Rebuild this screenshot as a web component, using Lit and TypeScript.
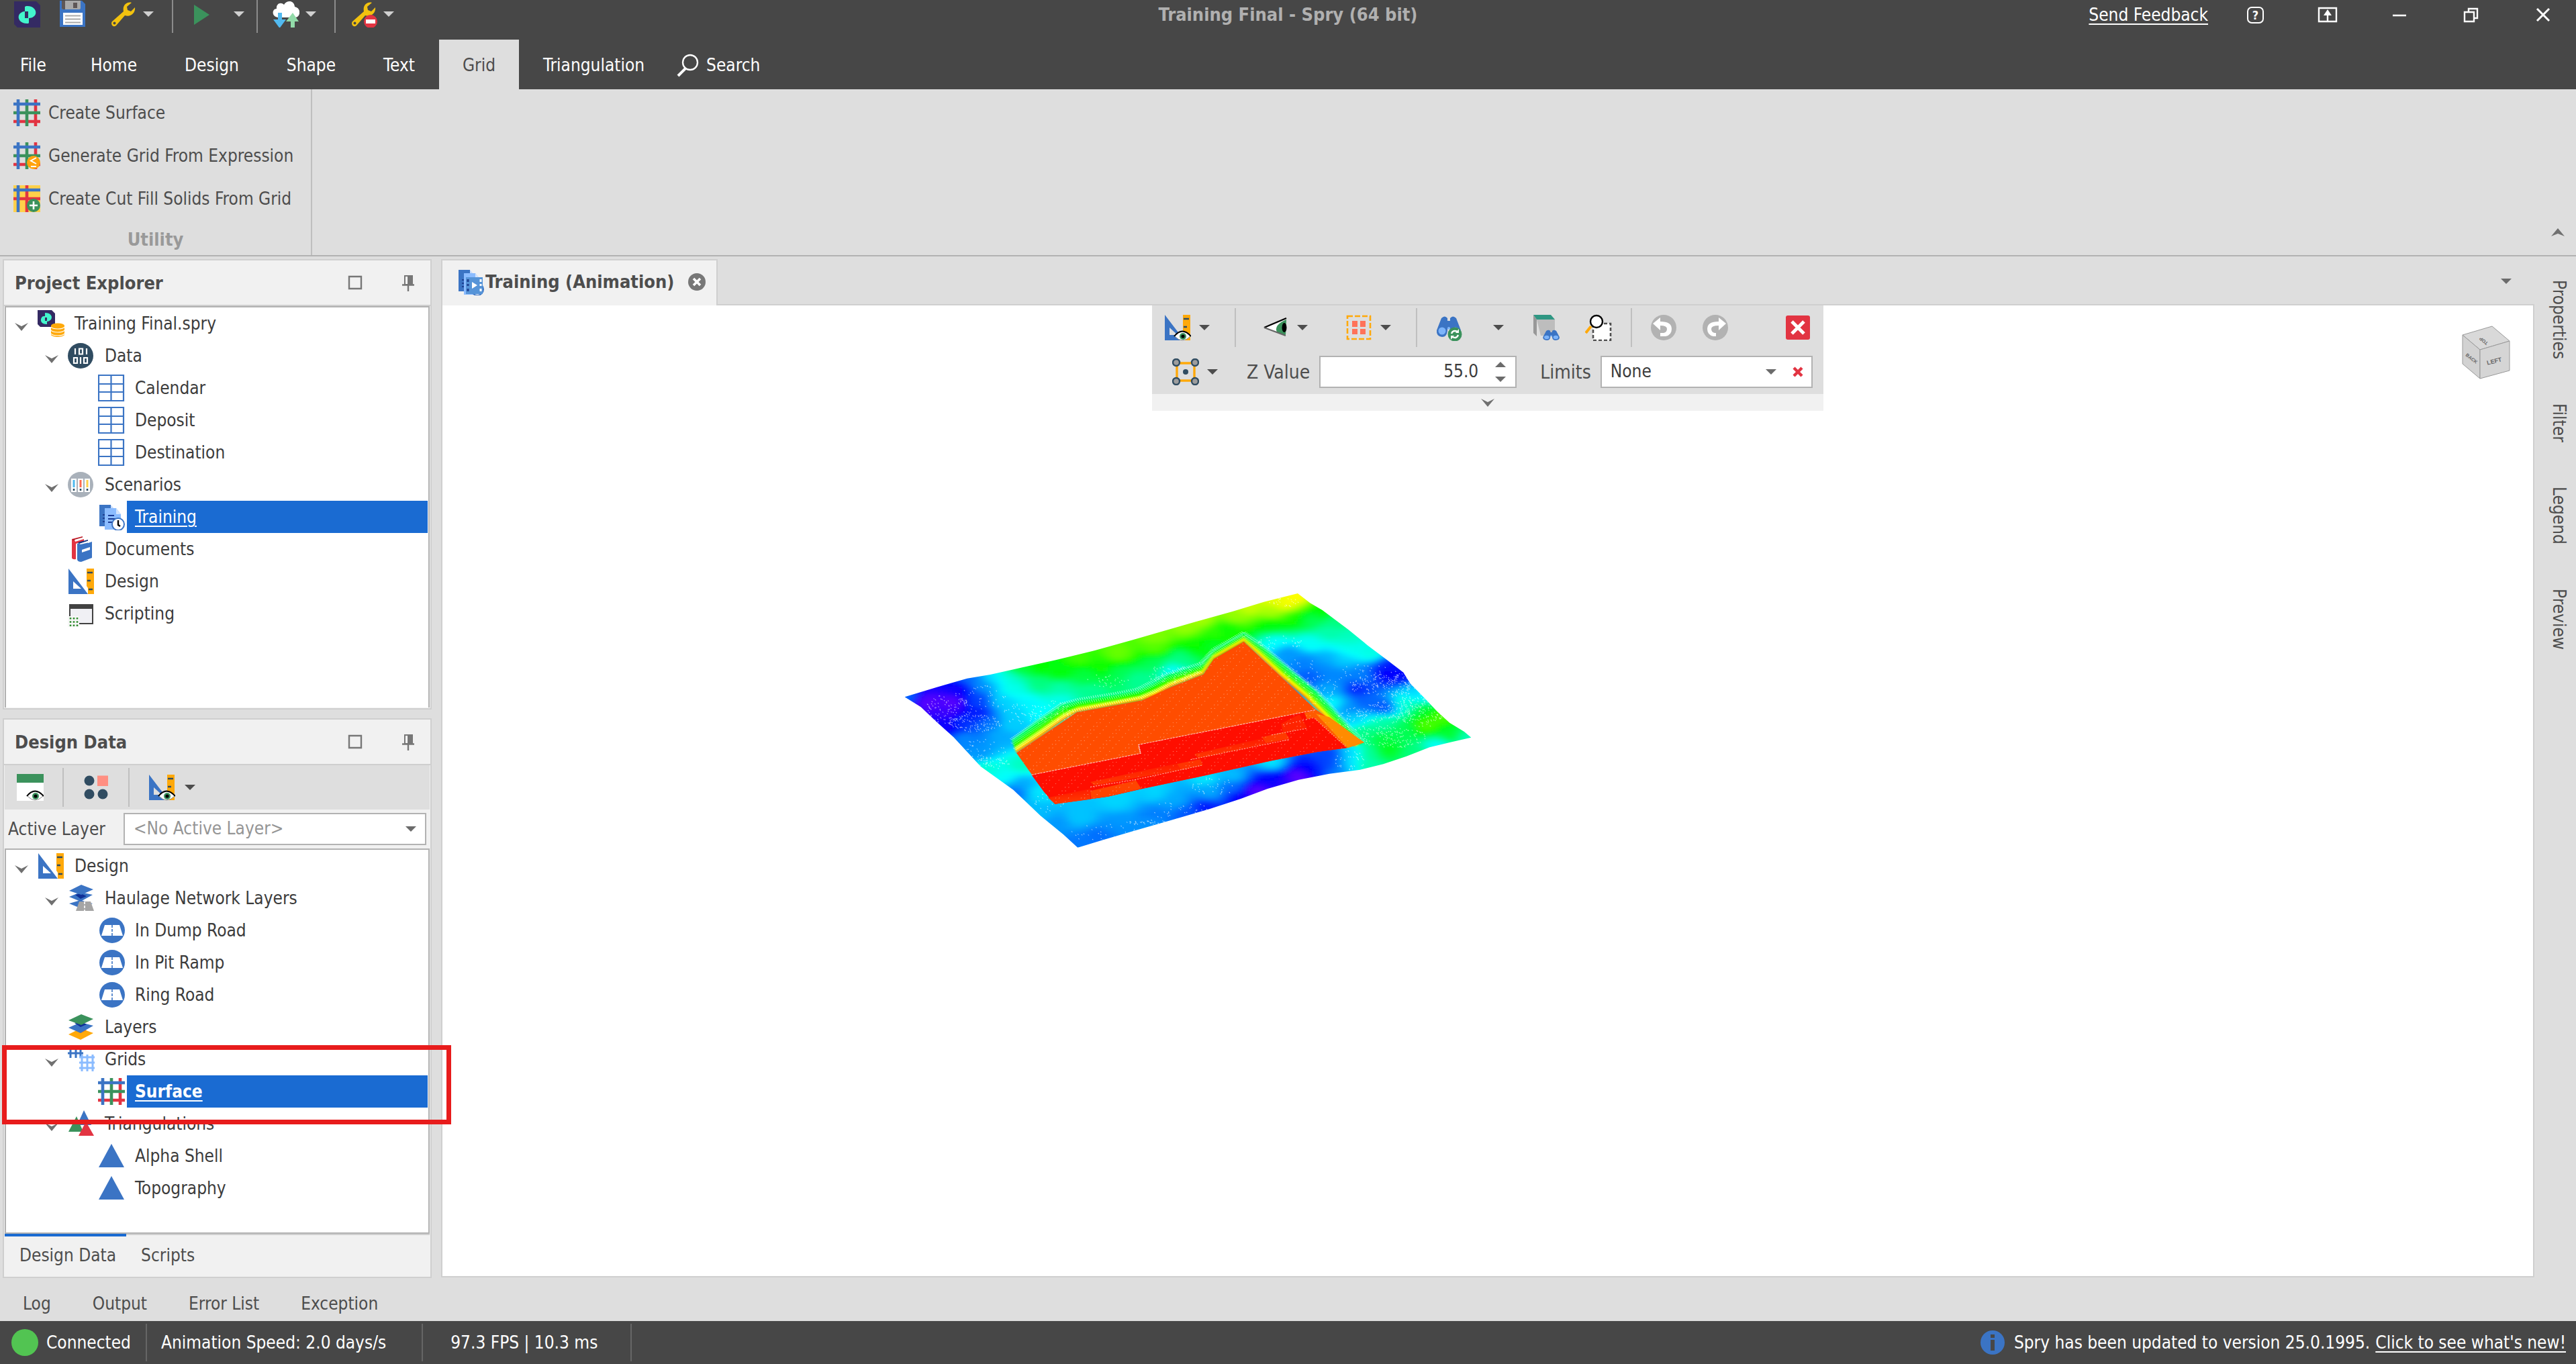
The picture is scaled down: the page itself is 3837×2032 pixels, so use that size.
import { LitElement, html, svg, css, nothing, type SVGTemplateResult, type TemplateResult } from "lit";
import { customElement, property } from "lit/decorators.js";
import { classMap } from "lit/directives/class-map.js";

/* ---------- shared icon fragments, drawn on a 40 x 40 grid ---------- */

const eyeSmall = svg`
  <path d="M16 33 Q27 19 39 33 Q27 45 16 33Z" fill="#fff" stroke="#8a8a8a" stroke-width="1"/>
  <path d="M15 33 Q27 18 40 33" fill="none" stroke="#000" stroke-width="2"/>
  <circle cx="28" cy="33" r="5" fill="#3b925c"/><circle cx="28" cy="33" r="2.6" fill="#000"/>`;

const ruler = svg`
  <path d="M1 1 L1 39 L30 39 Z M8 20 L8 31 L20 31 Z" fill="#3b74c4" fill-rule="evenodd"/>
  <path d="M28 1H39V39H30V30L28 27Z" fill="#ffa90a"/>
  <path d="M29 7h8M29 19h5M31 32h6" stroke="#304c61" stroke-width="2.4"/>`;

const wrench = svg`
  <path d="M32 3 C25 1 18 7 20 16 L3 31 C0 35 5 41 9 37 L22 22 C31 25 38 18 37 10 L31 16 L26 14 L25 9 Z" fill="#f2c20f"/>
  <circle cx="6.5" cy="33.500" r="2" fill="#474747"/>`;

const spryMark = svg`
  <path d="M1 1H34L40 7V41H7L1 35Z" fill="#342a63"/>
  <path d="M19 8 C29 7 35 14 33 20 C31 25 26 26 22 26 V16 H17 V9Z" fill="#43f5cc"/>
  <path d="M22 34 C12 35 6 28 8 22 C10 17 15 16 17 16 V26 H23 V33Z" fill="#43f5cc"/>`;

const gridLines = (a: string, b: string, c: string) => svg`
  <path d="M33 0V40M0 33H40" stroke="${c}" stroke-width="4.6"/>
  <path d="M20 0V40M0 20H40" stroke="${b}" stroke-width="4.6"/>
  <path d="M7 0V40M0 7H40" stroke="${a}" stroke-width="4.600"/>`;

const binoculars = svg`
  <path d="M9 6q5-5 9 0v4h4v-4q4-5 9 0l7 18q1 9-8 10-7 0-8-9v-4h-4v4q-1 9-8 9-9-1-8-10z" fill="#3b74c4"/>
  <circle cx="10" cy="25" r="5.500" fill="#7db4fa"/><circle cx="30" cy="25" r="5.500" fill="#7db4fa"/>
  <circle cx="20" cy="21" r="2" fill="#7db4fa"/>`;

const docs = svg`
  <path d="M2 2H19V34H2Z" fill="#3b74c4"/><path d="M19 2l6 7h-6z" fill="#c8dcfb"/>
  <path d="M7 17h5M7 22h5M7 27h5" stroke="#1d3f91" stroke-width="2"/>
  <path d="M10 7H27L34 16V39H10Z" fill="#8bbcff"/><path d="M27 7l7 9h-7z" fill="#d3e4fd"/>`;

const roadBadge = svg`
  <circle cx="21" cy="20" r="19" fill="#3b74c4"/>
  <path d="M10 12H32L37 28H5Z" fill="#fff"/>
  <path d="M21 12V28" stroke="#3b74c4" stroke-width="1.600" stroke-dasharray="4 2"/>`;

const tableIcon = svg`<path d="M1 1H38V39H1ZM19.500 1V39M1 14H38M1 26H38" fill="#fff" stroke="#3b74c4" stroke-width="2.200"/>`;

const ICONS: Record<string, SVGTemplateResult> = {
  spry: spryMark,
  save: svg`<path d="M1 0H34L39 5V39H1Z" fill="#3b74c4"/><path d="M4 0H32V11q0 2-2 2H6q-2 0-2-2Z" fill="#a9a9a9"/>
    <path d="M4 0H9V13H6q-2 0-2-2ZM21 3h6v8h-6z" fill="#5e5757"/><path d="M6 18H35V36H6Z" fill="#fff"/>
    <path d="M9 22.500H32M9 27.500H32M9 32.500H32" stroke="#a9a9a9" stroke-width="2.200"/>`,
  wrench,
  wrenchStop: svg`${wrench}<circle cx="30" cy="31" r="10" fill="#e23442"/><path d="M23 28h14v6h-14z" fill="#fff"/>`,
  play: svg`<path d="M9 6V36L32 21Z" fill="#3b925c"/>`,
  cloud: svg`<path d="M8 25 C-2 24 -1 12 6 12 C5 5 12 1 17 6 C21 -1 32 -1 33 9 C43 11 42 24 34 25Z" fill="#fff"/>
    <path d="M8 18h6v10h6l-9.500 13L1 28h7z" fill="#52baf0"/><path d="M27 41h6V31h6L30 18l-10 13h7z" fill="#92dba9"/>`,
  grid: gridLines("#3b74c4", "#3b925c", "#e23442"),
  gridExpr: svg`${gridLines("#3b74c4", "#3b925c", "#e23442")}<circle cx="30" cy="30" r="10" fill="#ffa30d"/>
    <path d="M34 23 L26 27.500 L34 32M26 36h8" fill="none" stroke="#fff" stroke-width="2"/>`,
  gridSolid: svg`<path d="M0 0H40V40H0Z" fill="#ffd04a"/><path d="M20 0V40M0 20H40" stroke="#e23442" stroke-width="4.600"/>
    <path d="M7 0V40M0 7H40" stroke="#3b74c4" stroke-width="4.600"/><circle cx="30" cy="30" r="10" fill="#3b925c"/>
    <path d="M30 24v12M24 30h12" stroke="#fff" stroke-width="2.600"/>`,
  project: svg`<path d="M0 0H21L26 5V25H4L0 21Z" fill="#342a63"/>
    <path d="M11 4c8 0 12 5 9 10-2 2-4 3-6 3v-6h-3zM14 21c-8 0-11-5-8-10 1-2 3-2 5-2v7h3z" fill="#43f5cc"/>
    <path d="M20 23v14c3 4 17 4 20 0V23z" fill="#ffa90a"/><ellipse cx="30" cy="23" rx="10" ry="3.500" fill="#ffa90a"/>
    <path d="M20 25c3 4 17 4 20 0M20 30c3 4 17 4 20 0M20 35c3 4 17 4 20 0" fill="none" stroke="#fff" stroke-width="1.200"/>`,
  data: svg`<circle cx="19" cy="20" r="19" fill="#304c61"/>
    <path d="M11 9v9M17 9.500h5v8h-5zM28 9v9M9 23h5v8H9zM19 22v10M24 23h5v8h-5z" fill="none" stroke="#fff" stroke-width="2.200"/>`,
  table: tableIcon,
  scenarios: svg`<circle cx="19" cy="20" r="19" fill="#a9b1ba"/>
    <path d="M5 11h8v20H5zM15 11h8v20h-8zM25 11h8v20h-8z" fill="#fff"/>
    <path d="M9 13v11" stroke="#4fb9ee" stroke-width="3"/><path d="M19 13v11" stroke="#ff6a50" stroke-width="3"/>
    <path d="M29 13v11" stroke="#ffd04a" stroke-width="3"/><path d="M9 26v3M19 26v3M29 26v3" stroke="#304c61" stroke-width="2.600"/>`,
  scenario: svg`${docs}<path d="M15 18h9M15 23h13M15 28h6" stroke="#1a3c96" stroke-width="2.200"/>
    <circle cx="30" cy="31" r="9" fill="#fff" stroke="#3b74c4" stroke-width="2"/><path d="M30 25v7l3 2" fill="none" stroke="#000" stroke-width="2.400"/>`,
  animation: svg`${docs}<circle cx="30" cy="31" r="9" fill="#fff" stroke="#3b74c4" stroke-width="2"/>
    <path d="M13 13H38V38H13Z" fill="#5694d8"/><path d="M22 20v10l8-5z" fill="#fff"/>
    <path d="M16 16v4M16 23v3M16 30v4" stroke="#1d3f91" stroke-width="3"/><path d="M35 16v4M35 23v3M35 30v4" stroke="#fff" stroke-width="3"/>`,
  books: svg`<path d="M6 5L22 1V6L10 10V34L12 35q-6 1-6-3Z" fill="#e23442"/><path d="M6 6L22 1.500v3L12 8z" fill="#a00d16"/>
    <path d="M8 7l16-4v5L12 12V35q-6 0-6-3V7z" fill="#e23442"/><path d="M10 6l14-4v3L11 9z" fill="#fff"/>
    <path d="M14 12l16-5v4l6-2V33L20 39q-6 0-6-4z" fill="#3b74c4"/><path d="M15 10l15-4v2L17 12z" fill="#14307c"/>
    <path d="M17 12l15-5v3L19 13z" fill="#fff"/><path d="M21 21l12-4v4l-12 4z" fill="#fff"/>`,
  ruler,
  rulerEye: svg`${ruler}${eyeSmall}`,
  script: svg`<path d="M3 7H37V35H3Z" fill="#f0f0f4" stroke="#424242" stroke-width="2"/><path d="M2 6H38V13H2Z" fill="#424242"/>
    <path d="M0 24H17V40H0Z" fill="#f7f7f7"/><path d="M4 26v14M9 26v14M14 26v14" stroke="#2f8c2f" stroke-width="2.600" stroke-dasharray="2.600 2.600"/>`,
  haul: svg`<path d="M2 28l17-5 18 5-18 7z" fill="#3b74c4"/><path d="M2 18l17-7 18 4-18 10z" fill="#3b74c4"/><path d="M11 15l8 6 9-4-9-4z" fill="#0f2f96"/>
    <path d="M2 9L20 0 38 7 20 15z" fill="#3b74c4"/><path d="M17 25H34L39 39H12Z" fill="#a5a5a5"/>
    <path d="M25 25v14" stroke="#fff" stroke-width="1.600" stroke-dasharray="4 2"/>`,
  road: roadBadge,
  layers: svg`<path d="M1 31l18-9 19 7-19 10z" fill="#ffa90a"/><path d="M10 24l9 5 9-4-9-4z" fill="#ff7d00"/>
    <path d="M1 21l18-8 19 5-19 11z" fill="#3b74c4"/><path d="M10 14l9 6 9-4-9-4z" fill="#0f2f96"/><path d="M1 10L20 1l18 7-18 9z" fill="#3b925c"/>`,
  grids: svg`<path d="M4 0V18M12 0V18M19 0V18M0 3H23M0 11H23" stroke="#3b74c4" stroke-width="3"/>
    <path d="M21 13V38M29 13V38M37 13V38M17 17H40M17 25H40M17 33H40" stroke="#8bbcff" stroke-width="3"/>`,
  triangulations: svg`<path d="M24 0l11 22H14z" fill="#3b74c4"/><path d="M13 9L23 32H1z" fill="#3b925c"/><path d="M27 17L39 38H16z" fill="#e23442"/>`,
  triangle: svg`<path d="M20 2L39 37H1z" fill="#3b74c4"/>`,
  layerEye: svg`<path d="M0 0H40V40H0Z" fill="#fff"/><path d="M0 0H40V13H0Z" fill="#3b925c"/>${eyeSmall}`,
  shapes: svg`<circle cx="10" cy="10" r="7.500" fill="#304c61"/><circle cx="10" cy="30" r="7.500" fill="#304c61"/><circle cx="30" cy="30" r="7.500" fill="#304c61"/>
    <path d="M22 2.500H38V18H22Z" fill="#ff8f82"/>`,
  view: svg`<path d="M4 20L36 7Q31 19 36 32Z" fill="#fff"/><path d="M36 8Q17 16 22 27L35 32Z" fill="#3b925c"/>
    <ellipse cx="33" cy="20" rx="3.500" ry="7" fill="#000"/><path d="M36 6L3 20" stroke="#000" stroke-width="2.400"/><path d="M3 20L35 32" stroke="#666" stroke-width="2.400"/>`,
  selection: svg`<path d="M3 3H37V37H3Z" fill="none" stroke="#ffa90a" stroke-width="2.600" stroke-dasharray="8 3"/>
    <path d="M10 10h8v9h-8zM22 10h8v9h-8zM10 22h8v8h-8zM22 22h8v8h-8z" fill="#ff7259"/>`,
  findRefresh: svg`${binoculars}<circle cx="29" cy="30" r="10.500" fill="#3b925c"/>
    <path d="M24 29q2-6 9-3M34 31q-2 6-9 3" fill="none" stroke="#fff" stroke-width="2.400"/><path d="M35 22v6h-5zM23 38v-6h5z" fill="#fff"/>`,
  findSolid: svg`<path d="M1 1l5 7V33L1 28z" fill="#989898"/><path d="M6 8H33V32H12z" fill="#bdbdbd"/><path d="M1 1H27L33 8H6Z" fill="#2f9783"/>
    <g transform="translate(14 22) scale(.68 .5)">${binoculars}</g>`,
  zoomArea: svg`<path d="M12 14H38V39H12Z" fill="#fff" stroke="#4f4f4f" stroke-width="2.600" stroke-dasharray="5 3"/>
    <path d="M9 18L1 28" stroke="#ffa90a" stroke-width="4"/><circle cx="17" cy="11" r="9" fill="#fff" stroke="#000" stroke-width="2.400"/>`,
  undo: svg`<circle cx="20" cy="20" r="19" fill="#b2b2b2"/><path d="M4 14l11-9v6q17 0 17 11 0 9-9 11h-8v-5h5q5-1 5-6 0-5-10-5v7z" fill="#fff"/>`,
  redo: svg`<circle cx="20" cy="20" r="19" fill="#b2b2b2"/><path d="M36 14L25 5v6Q8 11 8 22q0 9 9 11h4v-5h-2q-5-1-5-6 0-5 11-5v7z" fill="#fff"/>`,
  closeBox: svg`<rect x="2" y="2" width="36" height="36" rx="3" fill="#e23442"/><path d="M11 11L29 29M29 11L11 29" stroke="#fff" stroke-width="5"/>`,
  nodes: svg`<path d="M7 7H33V33H7Z" fill="none" stroke="#ffa90a" stroke-width="3.400"/>
    <g fill="#9d9d9d" stroke="#304c61" stroke-width="2.400"><circle cx="6" cy="6" r="5"/><circle cx="34" cy="6" r="5"/><circle cx="6" cy="34" r="5"/><circle cx="34" cy="34" r="5"/></g>
    <circle cx="20" cy="20" r="4" fill="#304c61"/>`,
  info: svg`<circle cx="20" cy="20" r="18" fill="#3b74c4"/><path d="M17 8h6v5h-6zM17 16h6v16h-6z" fill="#474747"/>`,
  search: svg`<circle cx="24" cy="16" r="11" fill="none" stroke="#fff" stroke-width="2.400"/><path d="M17 25L6 36" stroke="#fff" stroke-width="4"/>`,
  roundClose: svg`<circle cx="20" cy="20" r="13" fill="#777"/><path d="M15 15L25 25M25 15L15 25" stroke="#fff" stroke-width="3.600"/>`,
  maximize: svg`<path d="M11 11H29V29H11Z" fill="none" stroke="#777" stroke-width="2.400"/>`,
  pin: svg`<path d="M14 9H27V23H14Z" fill="#777"/><path d="M16 11h3v11h-3z" fill="#fff"/><path d="M11 23.500H29M20 24v9" stroke="#777" stroke-width="2.400"/>`,
  popout: svg`<path d="M7 10H33V30H7Z" fill="none" stroke="#fff" stroke-width="2.400"/><path d="M20 29V15" stroke="#fff" stroke-width="2.400"/><path d="M14 21l6-9 6 9z" fill="#fff"/>`,
  minimize: svg`<path d="M10 21H30" stroke="#fff" stroke-width="2.600"/>`,
  restore: svg`<path d="M10 16H24V30H10ZM16 15V11H29V25H25" fill="none" stroke="#fff" stroke-width="2.400"/>`,
  close: svg`<path d="M11 11L29 29M29 11L11 29" stroke="#fff" stroke-width="3"/>`,
  redX: svg`<path d="M14 14L26 26M26 14L14 26" stroke="#e23442" stroke-width="4.400"/>`,
};

const icon = (name: string) =>
  html`<svg class="icon" viewBox="0 0 40 40" width="40" height="40" aria-hidden="true">${ICONS[name]}</svg>`;

const caret = (up = false) => html`<svg class="caret" viewBox="0 0 16 8" width="16" height="8" aria-hidden="true">
  <path d=${up ? "M0 8H16L8 0Z" : "M0 0H16L8 8Z"} fill="currentColor"/></svg>`;

const chevron = (up = false) => html`<svg class="chevron" viewBox="0 0 20 12" width="20" height="12" aria-hidden="true">
  <path d=${up ? "M0 12L10 0L20 12L10 8Z" : "M0 0L10 12L20 0L10 5Z"} fill="#707070"/></svg>`;

const base = css`
  * { box-sizing: border-box; }
  button, input, select { font: inherit; color: inherit; margin: 0; border: 0; background: none; padding: 0; border-radius: 0; appearance: none; }
  a { color: inherit; text-decoration-thickness: 2px; text-underline-offset: 4px; }
  svg { display: block; flex: none; }
`;

/* ---------- tree ---------- */

interface Node { label: string; icon: string; level: number; open?: boolean; selected?: boolean; strong?: boolean; }

@customElement("tree-view")
export class TreeView extends LitElement {
  @property({ attribute: false }) nodes: Node[] = [];
  static styles = [base, css`
    :host { display: block; }
    ul { list-style: none; margin: 0; padding: 0; }
    .row { display: flex; align-items: center; height: 48px; padding-left: 13px; }
    .l1 { padding-left: 58px; }
    .l2 { padding-left: 103px; }
    .toggle { width: 20px; height: 20px; margin-right: 14px; display: flex; align-items: center; flex: none; padding-top: 10px; }
    .label { flex: 1; height: 48px; line-height: 48px; margin-left: 3px; margin-right: 1px; padding-left: 12px; color: #3c3c3c; white-space: nowrap; }
    .selected .label { background: #1a6bd2; color: #fff; text-decoration: underline 2px; text-underline-offset: 4px; }
    .strong .label { font-weight: bold; }
  `];
  render() {
    return html`<ul role="tree">${this.nodes.map((n) => html`
      <li role="treeitem" aria-level=${n.level + 1} aria-selected=${n.selected ? "true" : "false"}
        class=${classMap({ row: true, ["l" + n.level]: true, selected: !!n.selected, strong: !!n.strong })}>
        ${n.open ? html`<button class="toggle" aria-label="Collapse ${n.label}">${chevron()}</button>` : html`<span class="toggle"></span>`}
        ${icon(n.icon)}<span class="label">${n.label}</span>
      </li>`)}</ul>`;
  }
}

/* ---------- height-coloured terrain ---------- */

type Pt = [number, number];

/** Sampled heights as x, y, hue. */
const SAMPLES: [number, number, number][] = [
  [55,535,215],[100,555,262],[170,560,262],[160,600,255],[190,500,245],[250,480,205],[220,455,215],[240,550,225],[240,610,235],[200,650,228],[165,670,245],
  [275,450,185],[320,440,172],[330,500,175],[300,550,190],[370,560,182],[330,600,190],[270,650,212],[200,720,208],[240,790,205],[300,700,200],[320,660,190],
  [260,850,170],[310,890,178],[350,840,165],[350,920,200],[330,960,215],[400,960,185],[400,1050,195],[440,1100,205],[500,1190,212],[550,1160,214],[500,1070,193],
  [600,1000,190],[600,1100,205],[700,960,190],[700,1060,210],[680,1110,205],[780,1060,220],[750,1000,200],[830,1030,235],[840,960,200],[830,900,186],[900,890,195],
  [900,940,215],[920,985,245],[960,955,262],[1000,900,240],[1070,890,265],[1100,860,240],[1040,930,250],[1140,840,225],[1150,790,225],[1000,830,185],[1170,870,210],
  [1215,850,190],[1210,790,190],[1250,790,155],[1240,850,155],[1300,770,125],[1370,790,150],[1430,750,180],[1510,720,165],[1460,700,130],[1400,660,100],[1440,620,100],
  [1400,590,130],[1340,680,140],[1290,720,135],[1240,690,150],[1290,650,160],[1220,640,190],[1350,560,170],[1370,520,190],[1400,540,180],[1240,560,218],[1290,580,222],
  [1200,580,205],[1160,560,180],[1150,500,200],[1340,430,240],[1300,430,242],[1300,400,235],[1220,500,232],[1230,440,210],[1160,440,208],[1100,440,220],[1130,410,208],
  [1150,370,200],[1180,360,190],[1040,340,205],[1080,380,210],[1010,290,180],[1100,290,178],[1200,320,175],[1260,340,172],[1150,240,160],[1200,270,165],[1100,190,140],
  [1170,200,150],[1000,210,125],[1130,150,120],[1060,180,115],[1065,85,58],[1010,100,65],[1040,120,60],[940,130,72],[900,170,85],[1000,160,80],[820,190,80],[780,230,85],
  [850,250,110],[700,270,90],[700,320,100],[800,300,118],[600,340,95],[500,360,105],[560,400,115],[400,400,118],[450,430,122],[520,440,135],[600,430,140],[700,380,140],
  [760,360,150],[740,410,180],[650,460,155],[530,510,155],[450,490,160],[400,480,150],[340,410,130],[400,600,180],[450,550,175],[880,230,120],[850,300,130],
];

const OUTLINE = "48,535 130,492 210,452 270,435 340,408 440,370 540,328 640,280 720,240 800,200 900,152 980,110 1068,72 1100,115 1132,147 1200,235 1250,305 1300,370 1342,425 1360,475 1400,545 1430,600 1462,650 1500,690 1518,716 1470,735 1410,760 1350,800 1290,835 1230,860 1150,878 1070,905 990,945 920,990 840,1035 740,1085 640,1135 560,1175 497,1208 460,1150 400,1065 330,950 245,845 175,715 130,645 90,580";

const CELL = 14;

function terrainBands(): [number, string][] {
  const bands = new Map<number, string>();
  for (let y = 56; y < 1220; y += CELL) {
    for (let x = 28; x < 1540; x += CELL) {
      let sum = 0, weight = 0;
      for (const [sx, sy, hue] of SAMPLES) {
        const dx = sx - x - CELL / 2, dy = (sy - y - CELL / 2) * 0.9;
        const w = 1 / Math.pow(dx * dx + dy * dy + 500, 2);
        sum += hue * w;
        weight += w;
      }
      const hue = Math.round(sum / weight / 2) * 2;
      bands.set(hue, (bands.get(hue) ?? "") + `M${x} ${y}h15v15h-15z`);
    }
  }
  return [...bands];
}

const RIM_OUT: Pt[] = [[325,725],[390,640],[455,565],[500,545],[590,520],[650,500],[690,470],[730,432],[815,385],[850,320],[928,245],[980,310],[1050,410],[1120,510],[1240,738]];
const RIM_IN: Pt[] = [[338,785],[400,715],[455,645],[495,603],[580,577],[665,550],[700,528],[740,490],[823,434],[850,365],[928,288],[960,340],[1020,440],[1085,535],[1215,757]];
const RIM_HUES = [155, 142, 130, 122, 115, 100, 80, 60, 46, 32];

function rimBand(i: number): string {
  const at = (t: number) => RIM_OUT.map(([x, y], k): Pt => [x + (RIM_IN[k][0] - x) * t, y + (RIM_IN[k][1] - y) * t]);
  const a = at(i / RIM_HUES.length), b = at(Math.min(1, (i + 1.3) / RIM_HUES.length)).reverse();
  return [...a, ...b].map(([x, y]) => `${x.toFixed(0)},${y.toFixed(0)}`).join(" ");
}

/** Speckle clusters as centre, radii and count. */
const CLUSTERS: number[][] = [
  [160,590,60,70,110],[240,540,70,60,50],[230,650,70,40,130],[250,780,60,60,50],[270,830,50,25,50],[360,610,60,50,50],[1290,480,90,50,150],[1350,490,50,70,100],[1310,600,90,50,170],
  [1390,600,60,70,150],[1310,710,90,50,160],[1210,640,40,60,60],[1130,500,50,70,60],[1030,110,40,20,25],[1020,290,60,30,40],[1080,420,50,60,40],[570,460,60,30,30],
  [740,430,70,40,80],[430,600,60,50,60],[700,1095,80,12,50],[760,1040,80,40,40],[850,930,60,40,40],[560,1140,90,40,30],[1250,440,80,60,60],[1200,820,40,60,40],[420,1000,40,50,25],
];

function speckles(): string {
  let seed = 7, d = "";
  const rnd = () => (seed = (seed * 16807) % 2147483647) / 2147483647;
  for (const [cx, cy, rx, ry, n] of CLUSTERS) {
    for (let i = 0; i < n; i++) {
      const r = Math.sqrt(rnd()), a = rnd() * Math.PI * 2;
      d += `M${(cx + Math.cos(a) * r * rx).toFixed(0)} ${(cy + Math.sin(a) * r * ry).toFixed(0)}l2 4`;
    }
  }
  return d;
}

function furrows(): string {
  let d = "";
  for (let x = 60; x < 1300; x += 33) {
    d += `M${x} 1020L${x + 400} 240`;
    if (x % 2) d += `M${x + 9} 1020L${x + 409} 240`;
  }
  return d;
}

@customElement("terrain-surface")
export class TerrainSurface extends LitElement {
  static styles = css`:host { display: block; } svg { display: block; width: 900px; height: 430px; }`;
  render() {
    return html`<svg viewBox="0 0 1568 1290" preserveAspectRatio="none" role="img" aria-label="Terrain surface coloured by height">
      <defs>
        <clipPath id="outline"><polygon points=${OUTLINE}></polygon></clipPath>
        <clipPath id="pit"><path d="M338 785L495 603L580 577L665 550L740 490L823 434L850 365L928 288L1115 592L1215 757L1120 780L1000 820L830 885L665 945L575 980L438 1013L410 960Z"/></clipPath>
        <filter id="soft" x="-5%" y="-5%" width="110%" height="110%"><feGaussianBlur stdDeviation="10"/></filter>
        <filter id="edge" x="-5%" y="-5%" width="110%" height="110%"><feGaussianBlur stdDeviation="3"/></filter>
        <linearGradient id="warm" x1="0" y1="0" x2="0.300" y2="1"><stop offset="0" stop-color="#ff0e00"/><stop offset="1" stop-color="#ff3c00"/></linearGradient>
      </defs>
      <g clip-path="url(#outline)">
        <g filter="url(#soft)">${terrainBands().map(([hue, d]) => svg`<path d=${d} fill=${`hsl(${hue} 100% 50%)`}/>`)}</g>
        <g filter="url(#edge)">${RIM_HUES.map((hue, i) => svg`<polygon points=${rimBand(i)} fill=${`hsl(${hue} 100% 50%)`}/>`)}</g>
        <path d="M325 725L455 565L500 545L590 520L650 500L730 432L815 385L850 320L928 245L980 310L1120 510L1240 738" fill="none" stroke="#fff" stroke-opacity=".6" stroke-width="12" stroke-dasharray="2 4"/>
        <path d="M328 745L465 580L500 562L590 537L655 513L735 450L818 400L850 335L928 260L975 325L1110 525L1232 744" fill="none" stroke="#fff" stroke-opacity=".5" stroke-width="14" stroke-dasharray="2 4"/>
        <path d="M334 768L480 598L660 537L738 478L820 421" fill="none" stroke="#fff" stroke-opacity=".6" stroke-width="14" stroke-dasharray="2 4"/>
        <path d=${speckles()} stroke="#fff" stroke-opacity=".6" stroke-width="2"/>
      </g>
      <path d="M338 785L495 603L580 577L665 550L740 490L823 434L850 365L928 288L1115 592L1240 738L1195 763L1120 780L1000 820L830 885L665 945L575 980L438 1013L410 960Z" fill="#ff4d00"/>
      <path d="M377 883L660 787L655 748L1115 592L1195 763L1120 780L1000 820L830 885L665 945L575 980L438 1013L410 960Z" fill="#ff0e00"/>
      <path d="M420 985L530 945V992L438 1013Z" fill="url(#warm)"/>
      <path d="M530 955L648 908L662 945L575 980L532 990Z" fill="#ff4400"/>
      <path d="M530 915L755 832L765 860L540 930Z" fill="url(#warm)"/>
      <path d="M755 834L815 813L822 840L765 860Z" fill="#ff3400"/>
      <path d="M800 790L975 720L985 745L810 808Z" fill="url(#warm)"/>
      <path d="M975 715L1035 690L1046 722L985 742Z" fill="#ff3a00"/>
      <path d="M1025 655L1072 612L1092 672L1030 695Z" fill="#ff2400"/>
      <path d="M1085 606L1115 592L1240 738L1195 763L1110 628L1092 634Z" fill="#ff5a00"/>
      <path d="M1115 610L1150 625L1240 738L1198 763Z" fill="#ff8c00"/>
      <g clip-path="url(#pit)"><path d=${furrows()} stroke="#ffd0b8" stroke-opacity=".6" stroke-width="2" stroke-dasharray="3 15"/></g>
      <g fill="none" stroke="#ffb4a0" stroke-width="3" stroke-dasharray="4 3">
        <path d="M377 883L660 787L655 748L1115 592" stroke="#ffccc0" stroke-dasharray="6 2"/><path d="M530 937L645 905L820 840"/><path d="M790 815L1046 725"/><path d="M1030 660L1110 628L1195 760" stroke-dasharray="3 6"/>
        <path d="M1000 705L1092 675"/>
      </g>
    </svg>`;
  }
}

/* ---------- application ---------- */

const MENU = ["Home", "Design", "Shape", "Text", "Grid", "Triangulation"];

const PROJECT: Node[] = [
  { label: "Training Final.spry", icon: "project", level: 0, open: true },
  { label: "Data", icon: "data", level: 1, open: true },
  { label: "Calendar", icon: "table", level: 2 },
  { label: "Deposit", icon: "table", level: 2 },
  { label: "Destination", icon: "table", level: 2 },
  { label: "Scenarios", icon: "scenarios", level: 1, open: true },
  { label: "Training", icon: "scenario", level: 2, selected: true },
  { label: "Documents", icon: "books", level: 1 },
  { label: "Design", icon: "ruler", level: 1 },
  { label: "Scripting", icon: "script", level: 1 },
];

const DESIGN: Node[] = [
  { label: "Design", icon: "ruler", level: 0, open: true },
  { label: "Haulage Network Layers", icon: "haul", level: 1, open: true },
  { label: "In Dump Road", icon: "road", level: 2 },
  { label: "In Pit Ramp", icon: "road", level: 2 },
  { label: "Ring Road", icon: "road", level: 2 },
  { label: "Layers", icon: "layers", level: 1 },
  { label: "Grids", icon: "grids", level: 1, open: true },
  { label: "Surface", icon: "grid", level: 2, selected: true, strong: true },
  { label: "Triangulations", icon: "triangulations", level: 1, open: true },
  { label: "Alpha Shell", icon: "triangle", level: 2 },
  { label: "Topography", icon: "triangle", level: 2 },
];

@customElement("app-root")
export class AppRoot extends LitElement {
  static styles = [base, css`
    :host { display: flex; flex-direction: column; min-height: 100vh; background: #dedede; color: #4d4d4d;
      font: 26px/32px "DejaVu Sans Condensed", "Noto Sans", sans-serif; }

    .titlebar { display: grid; grid-template-columns: 1fr auto 1fr; height: 59px; background: #474747; color: #fff; }
    .quick { display: flex; height: 49px; padding: 0 0 8px 20px; align-items: center; }
    .quick > .icon { margin-top: 1px; }
    .save { margin-left: 28px; }
    .split { display: flex; align-items: center; gap: 9px; height: 49px; margin-bottom: -8px; padding: 0 27px 8px 22px; border-right: 2px solid #8c8c8c; color: #d0d0d0; }
    .split.first { margin-left: 14px; }
    .split.wide { gap: 28px; padding-right: 18px; }
    .split:last-child { border: 0; }
    .title { margin: 0; font-size: 27px; line-height: 44px; color: #b0b0b0; }
    .window { display: flex; justify-content: flex-end; align-items: center; height: 44px; padding-right: 29px; gap: 67px; }
    .feedback { margin-right: -9px; }
    .help { width: 25px; height: 25px; margin-right: 8px; border: 2px solid #fff; border-radius: 7px; font-size: 18px; line-height: 21px; font-weight: bold; text-align: center; }

    .menubar { display: flex; gap: 1px; height: 74px; background: #474747; color: #fff; }
    .menubar button { padding: 2px 35px 0; height: 74px; white-space: nowrap; }
    .menubar .file { padding: 2px 30px 0; }
    .menubar .active { background: #dedede; color: #4d4d4d; }
    .menubar .find { display: flex; align-items: center; gap: 8px; padding: 2px 8px 0; }

    .ribbon { display: flex; height: 249px; border-bottom: 2px solid #b2b2b2; justify-content: space-between; align-items: stretch; }
    .group { display: flex; flex-direction: column; width: 465px; padding: 3px 0 0 20px; border-right: 2px solid #bfbfbf; }
    .group button { display: flex; align-items: center; gap: 12px; height: 64px; white-space: nowrap; text-align: left; }
    .group h2 { margin: 13px 20px 0 0; font-size: 27px; line-height: 32px; text-align: center; color: #999; }
    .collapse { align-self: flex-end; margin: 0 17px 28px; }

    .main { display: flex; flex: 1; padding-top: 4px; }
    .side { display: flex; flex-direction: column; gap: 13px; width: 639px; flex: none; margin-left: 4px; }
    .panel { display: flex; flex-direction: column; border: 2px solid #cfcfcf; background: #f1f1f1; }
    .panel.grow { flex: 1; }
    .head { display: flex; align-items: center; height: 68px; padding: 0 13px 0 16px; border-bottom: 2px solid #cfcfcf; }
    .head h2 { flex: 1; margin: 2px 0 0; font-size: 27px; line-height: 32px; }
    .head button + button { margin-left: 39px; }
    .tree { margin: 0 1px; border: 2px solid #b2b2b2; background: #fff; position: relative; }
    .tree.short { min-height: 598px; border-bottom: 0; margin-bottom: 1px; }
    .grow .tree { flex: 1; }
    .callout { position: absolute; left: -6px; top: 291px; width: 669px; height: 118px; border: 7px solid #e81c1c; pointer-events: none; z-index: 2; }
    .tools { display: flex; align-items: center; height: 66px; margin: 0 1px; background: #dedede; }
    .tools button { display: flex; align-items: center; gap: 14px; height: 58px; padding: 0 28px; border-right: 2px solid #bfbfbf; }
    .tools button:first-child { padding-left: 18px; }
    .tools button:last-child { border: 0; }
    .active-layer { display: flex; align-items: center; justify-content: space-between; height: 58px; padding: 0 6px; }
    .field { display: flex; align-items: center; height: 48px; border: 2px solid #b2b2b2; background: #fff; color: #6b6b6b; position: relative; }
    .field select, .field input { flex: 1; min-width: 0; height: 44px; padding: 0 0 2px 13px; color: #3c3c3c; }
    .field.layer { width: 451px; padding-right: 13px; }
    .field.layer select { color: #959595; }
    .tabs { display: flex; height: 64px; border-top: 2px solid #cfcfcf; margin: 0 1px; }
    .tabs button { padding: 0 15px 0 22px; height: 64px; margin-top: -2px; }
    .tabs .on { border-top: 4px solid #1a6bd2; padding-bottom: 4px; }

    .docs { display: flex; flex-direction: column; flex: 1; min-width: 0; margin-left: 14px; }
    .strip { display: flex; align-items: flex-end; justify-content: space-between; height: 69px; box-shadow: inset 0 -2px #cfcfcf; }
    .tab { display: flex; align-items: center; height: 69px; padding: 0 9px 3px 22px; width: 412px; border: 2px solid #cfcfcf; border-bottom: 0; background: #f1f1f1; }
    .tab h2 { margin: 0 auto 0 2px; font-size: 27px; line-height: 32px; white-space: nowrap; }
    .more { margin: 0 34px 32px; color: #6b6b6b; }
    .viewport { position: relative; flex: 1; background: #fff; border: 2px solid #cfcfcf; border-top: 0; overflow: hidden; margin-bottom: 1px; }
    .surface { position: absolute; left: 661px; top: 405px; }
    .cube { position: absolute; right: 34px; top: 29px; }
    .float { position: absolute; left: 1057px; top: 0; width: 1000px; background: #dedede; color: #4d4d4d; }
    .line { display: flex; align-items: center; height: 66px; }
    .line label { font-size: 28px; padding-top: 2px; }
    .line .sep { width: 2px; height: 58px; background: #bfbfbf; }
    .drop { display: flex; align-items: center; gap: 12px; padding: 0 37px 0 18px; }
    .drop.eye { padding: 0 28px 0 39px; }
    .drop.pick { padding-left: 28px; }
    .drop.seek { gap: 46px; padding: 0 43px 0 27px; }
    .drop.node { padding: 0 43px 0 30px; }
    .line .zoom { margin: 0 28px 0 38px; }
    .line .undo { margin: 0 37px 0 27px; }
    .line .end { margin-left: auto; margin-right: 18px; }
    .line .z { width: 294px; margin: 0 35px 0 14px; padding-right: 14px; }
    .z input { text-align: right; padding-right: 25px; }
    .spin { display: flex; flex-direction: column; gap: 14px; }
    .line .limits { width: 316px; margin-left: 14px; }
    .limits .clear { margin-left: 12px; }
    .fold { display: flex; width: 100%; height: 25px; align-items: center; justify-content: center; background: #f1f1f1; }

    .rail { display: flex; flex-direction: column; align-items: center; width: 62px; flex: none; padding-top: 31px; gap: 66px; }
    .rail button { writing-mode: vertical-rl; line-height: 32px; margin-left: 12px; }

    .outputs { display: flex; height: 64px; padding: 12px 34px 0; gap: 62px; align-items: center; }
    .outputs button { height: 40px; }
    .status { display: flex; align-items: center; height: 64px; background: #474747; color: #fff; white-space: nowrap; }
    .status > span { display: flex; align-items: center; height: 56px; border-right: 2px solid #666; }
    .conn { gap: 12px; padding: 0 22px 0 17px; }
    .dot { width: 40px; height: 40px; border-radius: 50%; background: #52c452; }
    .speed { padding: 0 53px 0 21px; }
    .fps { padding: 0 49px 0 41px; }
    .status .news { margin-left: auto; gap: 8px; border: 0; padding-right: 15px; }
    .news .icon { margin-right: 4px; }
  `];

  private split(name: string, label: string, cls = "") {
    return html`<button class="split ${cls}" aria-label=${label}>${icon(name)}${caret()}</button>`;
  }

  private head(title: string): TemplateResult {
    return html`<div class="head"><h2>${title}</h2>
      <button aria-label="Maximize ${title}">${icon("maximize")}</button><button aria-label="Pin ${title}">${icon("pin")}</button></div>`;
  }

  private floatBar() {
    return html`<div class="float" role="toolbar" aria-label="View tools">
      <div class="line">
        <button class="drop" aria-label="Design visibility">${icon("rulerEye")}${caret()}</button><span class="sep"></span>
        <button class="drop eye" aria-label="View">${icon("view")}${caret()}</button>
        <button class="drop pick" aria-label="Selection">${icon("selection")}${caret()}</button><span class="sep"></span>
        <button class="drop seek" aria-label="Find">${icon("findRefresh")}${caret()}</button>
        <button aria-label="Find solid">${icon("findSolid")}</button>
        <button class="zoom" aria-label="Zoom to area">${icon("zoomArea")}</button><span class="sep"></span>
        <button class="undo" aria-label="Undo">${icon("undo")}</button>
        <button aria-label="Redo">${icon("redo")}</button>
        <button class="end" aria-label="Close view">${icon("closeBox")}</button>
      </div>
      <div class="line">
        <button class="drop node" aria-label="Snap">${icon("nodes")}${caret()}</button>
        <label for="z">Z Value</label>
        <div class="field z"><input id="z" value="55.0"><span class="spin">
          <button aria-label="Increase">${caret(true)}</button><button aria-label="Decrease">${caret()}</button></span></div>
        <label for="limits">Limits</label>
        <div class="field limits"><select id="limits"><option>None</option></select>${caret()}
          <button class="clear" aria-label="Clear limits">${icon("redX")}</button></div>
      </div>
      <button class="fold" aria-label="Expand tools">${chevron()}</button>
    </div>`;
  }

  render() {
    return html`
      <header class="titlebar">
        <div class="quick">${icon("spry")}<button class="save" aria-label="Save">${icon("save")}</button>
          ${this.split("wrench", "Settings", "first")}${this.split("play", "Run", "wide")}${this.split("cloud", "Sync")}${this.split("wrenchStop", "Stop")}
        </div>
        <h1 class="title">Training Final - Spry (64 bit)</h1>
        <div class="window">
          <a class="feedback" href="#feedback">Send Feedback</a><button class="help" aria-label="Help">?</button>
          ${["popout", "minimize", "restore", "close"].map((n) => html`<button aria-label=${n}>${icon(n)}</button>`)}
        </div>
      </header>
      <nav class="menubar">
        <button class="file">File</button>
        ${MENU.map((m) => html`<button class=${m === "Grid" ? "active" : nothing}>${m}</button>`)}
        <button class="find">${icon("search")}Search</button>
      </nav>
      <section class="ribbon">
        <div class="group">
          <button>${icon("grid")}Create Surface</button>
          <button>${icon("gridExpr")}Generate Grid From Expression</button>
          <button>${icon("gridSolid")}Create Cut Fill Solids From Grid</button>
          <h2>Utility</h2>
        </div>
        <button class="collapse" aria-label="Collapse ribbon">${chevron(true)}</button>
      </section>
      <main class="main">
        <div class="side">
          <section class="panel">${this.head("Project Explorer")}
            <div class="tree short"><tree-view .nodes=${PROJECT}></tree-view></div>
          </section>
          <section class="panel grow">${this.head("Design Data")}
            <div class="tools">
              <button aria-label="Show layer">${icon("layerEye")}</button>
              <button aria-label="Shapes">${icon("shapes")}</button>
              <button aria-label="Design visibility">${icon("rulerEye")}${caret()}</button>
            </div>
            <div class="active-layer"><label for="layer">Active Layer</label>
              <div class="field layer"><select id="layer"><option>&lt;No Active Layer&gt;</option></select>${caret()}</div></div>
            <div class="tree"><tree-view .nodes=${DESIGN}></tree-view><div class="callout"></div></div>
            <div class="tabs"><button class="on">Design Data</button><button>Scripts</button></div>
          </section>
        </div>
        <section class="docs">
          <div class="strip"><div class="tab">${icon("animation")}<h2>Training (Animation)</h2><button aria-label="Close tab">${icon("roundClose")}</button></div>
            <button class="more" aria-label="Open documents">${caret()}</button></div>
          <div class="viewport">
            <terrain-surface class="surface"></terrain-surface>
            ${this.floatBar()}
            <svg class="cube" viewBox="0 0 72 82" width="72" height="82" role="img" aria-label="View cube">
              <g stroke="#999" stroke-width="1" stroke-linejoin="round"><path d="M1 15L45 2L71 24L27 37Z" fill="#d9d9d9"/>
              <path d="M1 15L27 37V80L1 58Z" fill="#d2d2d2"/><path d="M27 37L71 24V68L27 80Z" fill="#d5d5d5"/></g>
              <g font-family="Liberation Sans, sans-serif" font-size="9" font-weight="bold" fill="#666" text-anchor="middle">
                <text transform="translate(49 57) rotate(-14)">LEFT</text><text transform="translate(13 52) rotate(38)" font-size="7">BACK</text>
                <text transform="translate(34 22) rotate(220)" font-size="7">TOP</text></g>
            </svg>
          </div>
        </section>
        <nav class="rail">${["Properties", "Filter", "Legend", "Preview"].map((t) => html`<button>${t}</button>`)}</nav>
      </main>
      <nav class="outputs">${["Log", "Output", "Error List", "Exception"].map((t) => html`<button>${t}</button>`)}</nav>
      <footer class="status">
        <span class="conn"><i class="dot"></i>Connected</span>
        <span class="speed">Animation Speed: 2.0 days/s</span>
        <span class="fps">97.3 FPS | 10.3 ms</span>
        <span class="news">${icon("info")}Spry has been updated to version 25.0.1995. <a href="#news">Click to see what's new!</a></span>
      </footer>`;
  }
}
